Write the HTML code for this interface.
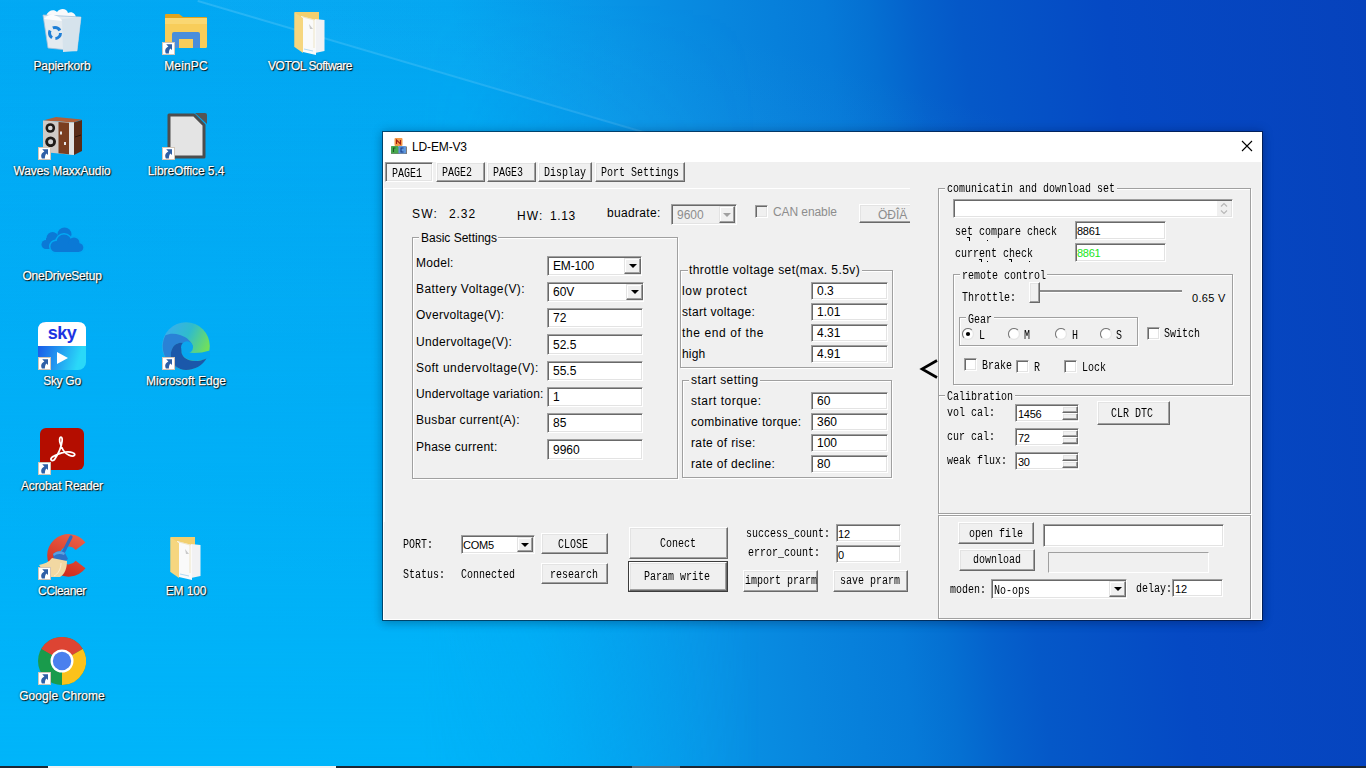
<!DOCTYPE html>
<html><head><meta charset="utf-8">
<style>
*{box-sizing:border-box;margin:0;padding:0}
html,body{width:1366px;height:768px;overflow:hidden}
body{position:relative;font-family:"Liberation Sans",sans-serif;font-size:12px;color:#000;
background:linear-gradient(83deg,#02aaf5 0px,#03a6f1 540px,#0894e6 700px,#0886de 810px,#067ad8 910px,#0570d2 955px,#0562cc 1000px,#0558c8 1045px,#0549c4 1190px,#0642bc 1449px);}
#bgb{position:absolute;left:0;top:0;width:1366px;height:768px;
 background:linear-gradient(180deg,rgba(0,182,250,0) 0%,rgba(0,182,250,.25) 35%,rgba(0,182,250,.9) 100%);
 -webkit-mask-image:linear-gradient(90deg,#000 0px,#000 420px,rgba(0,0,0,.4) 600px,rgba(0,0,0,0) 760px)}
#beam1{position:absolute;left:198px;top:0;width:700px;height:2px;transform-origin:0 0;transform:rotate(16.4deg);
 background:linear-gradient(90deg,rgba(190,235,255,.2),rgba(190,235,255,.14) 70%,rgba(190,235,255,0));filter:blur(.6px)}
#beam0{position:absolute;left:198px;top:-200px;width:900px;height:200px;transform-origin:0 100%;transform:rotate(16.4deg);
 background:linear-gradient(0deg,rgba(120,210,255,.05),rgba(120,210,255,0) 60%)}
.a{position:absolute}
/* desktop icons */
.lbl{position:absolute;color:#fff;font-size:12px;white-space:nowrap;text-align:center;
 text-shadow:1px 1px 1px #000,0 0 2px rgba(0,0,0,.85);-webkit-text-stroke:0.25px #fff;line-height:14px}
/* window */
#win{position:absolute;left:382px;top:131px;width:881px;height:490px;background:#fff;background-clip:padding-box;border:1px solid rgba(0,10,30,.55);
 box-shadow:0 0 10px rgba(0,0,30,.22),0 4px 8px rgba(0,0,30,.12)}
#client{position:absolute;left:384px;top:162px;width:877px;height:457px;background:#f0f0f0}
.s{position:absolute;font-family:"Liberation Sans",sans-serif;font-size:12px;line-height:12px;white-space:pre;color:#000}
.m{position:absolute;font-family:"Liberation Mono",monospace;font-size:12px;line-height:12px;white-space:pre;color:#000;
 transform:scaleX(.8333);transform-origin:0 0}
.g{color:#8d8d8d}
.ed{position:absolute;background:#fff;border:1px solid;border-color:#a0a0a0 #fff #fff #a0a0a0;
 box-shadow:inset 1px 1px #696969,inset -1px -1px #e3e3e3}
.bt{position:absolute;background:#f0f0f0;border:1px solid;border-color:#fff #696969 #696969 #fff;
 box-shadow:inset -1px -1px #a0a0a0,inset 1px 1px #e3e3e3}
.dd{position:absolute;background:#f0f0f0;border:1px solid;border-color:#e3e3e3 #696969 #696969 #e3e3e3;
 box-shadow:inset -1px -1px #a0a0a0,inset 1px 1px #fff}
.dd:after{content:"";position:absolute;left:50%;top:50%;margin-left:-4px;margin-top:-2px;border-left:4px solid transparent;border-right:4px solid transparent;border-top:4px solid #000}
.dd.dis:after{border-top-color:#a0a0a0}
.grp{position:absolute;border:1px solid #a0a0a0;box-shadow:inset 1px 1px #fff,1px 1px #fff}
.gl{position:absolute;background:#f0f0f0;height:12px}
.cb{position:absolute;width:13px;height:13px;background:#fff;border:1px solid;border-color:#a0a0a0 #fff #fff #a0a0a0;
 box-shadow:inset 1px 1px #696969,inset -1px -1px #e3e3e3}
.rd{position:absolute;width:12px;height:12px}
</style></head><body>
<div id="bgb"></div><div id="beam0"></div><div id="beam1"></div>

<!-- ============ WINDOW ============ -->
<div id="win"></div>
<div id="client"></div>
<!-- title -->
<svg class="a" style="left:390px;top:137px" width="18" height="18">
 <rect x="1" y="9.5" width="8" height="7.5" fill="#111" opacity=".55"/>
 <rect x="9" y="9.5" width="8" height="7.5" fill="#111" opacity=".55"/>
 <rect x="4.5" y="1" width="8" height="8" rx="1" fill="#f59a48"/>
 <rect x="1" y="9" width="7.5" height="7.5" rx="1" fill="#48a84e"/>
 <rect x="8.5" y="9" width="7.5" height="7.5" rx="1" fill="#5d96dc"/>
 <path d="M6.5 7V3L10.5 7V3" fill="none" stroke="#a01c10" stroke-width="1.1"/>
 <path d="M5.5 11H3.5V15" fill="none" stroke="#1d5a20" stroke-width="1.1"/>
 <path d="M13.5 11H11V15H13.5" fill="none" stroke="#1c3c88" stroke-width="1.1"/>
</svg>
<div class="s" style="left:412px;top:141px;letter-spacing:-0.14px">LD-EM-V3</div>
<svg class="a" style="left:1241px;top:140px" width="12" height="12"><path d="M1 1L11 11M11 1L1 11" stroke="#000" stroke-width="1.1"/></svg>

<!-- tabs -->
<div class="ed" style="left:385px;top:162px;width:48px;height:20px;background:#f4f4f4"></div>
<div class="m" style="left:392px;top:168px">PAGE1</div>
<div class="bt" style="left:436px;top:162px;width:49px;height:20px"></div>
<div class="m" style="left:442px;top:167px">PAGE2</div>
<div class="bt" style="left:487px;top:162px;width:49px;height:20px"></div>
<div class="m" style="left:493px;top:167px">PAGE3</div>
<div class="bt" style="left:538px;top:162px;width:54px;height:20px"></div>
<div class="m" style="left:544px;top:167px">Display</div>
<div class="bt" style="left:595px;top:162px;width:90px;height:20px"></div>
<div class="m" style="left:601px;top:167px">Port Settings</div>

<!-- tab page edge -->
<div class="a" style="left:384px;top:188px;width:526px;height:1px;background:#fff"></div>
<div class="a" style="left:384px;top:188px;width:1px;height:334px;background:#fff"></div>

<!-- SW / HW row -->
<div class="s" style="left:412px;top:208px;letter-spacing:1.25px">SW:</div>
<div class="s" style="left:449px;top:208px;letter-spacing:0.90px">2.32</div>
<div class="s" style="left:517px;top:210px;letter-spacing:1.15px">HW:</div>
<div class="s" style="left:550px;top:210px;letter-spacing:0.60px">1.13</div>
<div class="s" style="left:607px;top:207px;letter-spacing:0.33px">buadrate:</div>
<div class="ed" style="left:671px;top:204px;width:66px;height:21px;background:#f0f0f0"></div>
<div class="dd dis" style="left:719px;top:206px;width:16px;height:17px"></div>
<div class="s g" style="left:677px;top:209px">9600</div>
<div class="cb" style="left:755px;top:205px;background:#f0f0f0"></div>
<div class="s g" style="left:773px;top:206px;letter-spacing:-0.09px">CAN enable</div>
<div class="a" style="left:859px;top:204px;width:51px;height:19px;overflow:hidden">
 <div class="bt" style="left:0;top:0;width:60px;height:19px"></div>
 <div class="s g" style="left:19px;top:5px">ÖÐÎÄ</div>
</div>

<!-- Basic Settings -->
<div class="grp" style="left:412px;top:237px;width:266px;height:242px"></div>
<div class="gl" style="left:419px;top:232px;width:79px"></div>
<div class="s" style="left:421px;top:232px">Basic Settings</div>

<div class="s" style="left:416px;top:257px;letter-spacing:0.28px">Model:</div>
<div class="ed" style="left:547px;top:256px;width:95px;height:20px"></div>
<div class="dd" style="left:624px;top:258px;width:17px;height:16px"></div>
<div class="s" style="left:553px;top:260px;letter-spacing:-0.16px">EM-100</div>

<div class="s" style="left:416px;top:283px;letter-spacing:0.44px">Battery Voltage(V):</div>
<div class="ed" style="left:547px;top:282px;width:97px;height:20px"></div>
<div class="dd" style="left:626px;top:284px;width:17px;height:16px"></div>
<div class="s" style="left:553px;top:286px">60V</div>

<div class="s" style="left:416px;top:309px;letter-spacing:0.29px">Overvoltage(V):</div>
<div class="ed" style="left:547px;top:308px;width:96px;height:20px"></div>
<div class="s" style="left:553px;top:312px">72</div>

<div class="s" style="left:416px;top:336px;letter-spacing:0.35px">Undervoltage(V):</div>
<div class="ed" style="left:547px;top:334px;width:96px;height:21px"></div>
<div class="s" style="left:553px;top:339px">52.5</div>

<div class="s" style="left:416px;top:362px;letter-spacing:0.45px">Soft undervoltage(V):</div>
<div class="ed" style="left:547px;top:361px;width:96px;height:20px"></div>
<div class="s" style="left:553px;top:365px">55.5</div>

<div class="s" style="left:416px;top:388px;letter-spacing:0.18px">Undervoltage variation:</div>
<div class="ed" style="left:547px;top:387px;width:96px;height:20px"></div>
<div class="s" style="left:553px;top:391px">1</div>

<div class="s" style="left:416px;top:414px;letter-spacing:0.32px">Busbar current(A):</div>
<div class="ed" style="left:547px;top:413px;width:96px;height:20px"></div>
<div class="s" style="left:553px;top:417px">85</div>

<div class="s" style="left:416px;top:441px;letter-spacing:0.25px">Phase current:</div>
<div class="ed" style="left:547px;top:439px;width:96px;height:21px"></div>
<div class="s" style="left:553px;top:444px">9960</div>

<!-- throttle voltage set -->
<div class="grp" style="left:680px;top:270px;width:213px;height:98px"></div>
<div class="gl" style="left:688px;top:265px;width:174px"></div>
<div class="s" style="left:689px;top:264px;letter-spacing:0.42px">throttle voltage set(max. 5.5v)</div>
<div class="s" style="left:682px;top:285px;letter-spacing:0.67px">low protect</div>
<div class="ed" style="left:811px;top:282px;width:77px;height:18px"></div>
<div class="s" style="left:817px;top:285px">0.3</div>
<div class="s" style="left:682px;top:306px;letter-spacing:0.31px">start voltage:</div>
<div class="ed" style="left:811px;top:303px;width:77px;height:18px"></div>
<div class="s" style="left:817px;top:306px">1.01</div>
<div class="s" style="left:682px;top:327px;letter-spacing:0.62px">the end of the</div>
<div class="ed" style="left:811px;top:324px;width:77px;height:18px"></div>
<div class="s" style="left:817px;top:327px">4.31</div>
<div class="s" style="left:682px;top:348px;letter-spacing:0.20px">high</div>
<div class="ed" style="left:811px;top:345px;width:77px;height:18px"></div>
<div class="s" style="left:817px;top:348px">4.91</div>

<!-- start setting -->
<div class="grp" style="left:682px;top:380px;width:210px;height:98px"></div>
<div class="gl" style="left:689px;top:375px;width:71px"></div>
<div class="s" style="left:691px;top:374px;letter-spacing:0.42px">start setting</div>
<div class="s" style="left:691px;top:395px;letter-spacing:0.50px">start torque:</div>
<div class="ed" style="left:811px;top:392px;width:77px;height:18px"></div>
<div class="s" style="left:817px;top:395px">60</div>
<div class="s" style="left:691px;top:416px;letter-spacing:0.30px">combinative torque:</div>
<div class="ed" style="left:811px;top:413px;width:77px;height:18px"></div>
<div class="s" style="left:817px;top:416px">360</div>
<div class="s" style="left:691px;top:437px;letter-spacing:0.36px">rate of rise:</div>
<div class="ed" style="left:811px;top:434px;width:77px;height:18px"></div>
<div class="s" style="left:817px;top:437px">100</div>
<div class="s" style="left:691px;top:458px;letter-spacing:0.34px">rate of decline:</div>
<div class="ed" style="left:811px;top:455px;width:77px;height:18px"></div>
<div class="s" style="left:817px;top:458px">80</div>

<!-- bottom left -->
<div class="m" style="left:403px;top:539px">PORT:</div>
<div class="ed" style="left:461px;top:535px;width:74px;height:19px"></div>
<div class="dd" style="left:517px;top:537px;width:16px;height:15px"></div>
<div class="s" style="left:463px;top:539px;font-size:11px;letter-spacing:-0.2px">COM5</div>
<div class="bt" style="left:541px;top:533px;width:67px;height:21px"></div>
<div class="m" style="left:558px;top:539px">CLOSE</div>
<div class="m" style="left:403px;top:569px">Status:</div>
<div class="m" style="left:461px;top:569px">Connected</div>
<div class="bt" style="left:541px;top:563px;width:67px;height:21px"></div>
<div class="m" style="left:550px;top:569px">research</div>

<div class="bt" style="left:629px;top:527px;width:99px;height:32px"></div>
<div class="m" style="left:660px;top:538px">Conect</div>
<div class="a" style="left:628px;top:561px;width:100px;height:31px;border:1px solid #3c3c3c"></div>
<div class="bt" style="left:629px;top:562px;width:98px;height:29px"></div>
<div class="m" style="left:644px;top:571px">Param write</div>

<div class="m" style="left:746px;top:528px">success_count:</div>
<div class="ed" style="left:836px;top:524px;width:65px;height:18px"></div>
<div class="s" style="left:838px;top:528px;font-size:11px">12</div>
<div class="m" style="left:748px;top:547px">error_count:</div>
<div class="ed" style="left:836px;top:545px;width:65px;height:18px"></div>
<div class="s" style="left:838px;top:549px;font-size:11px">0</div>
<div class="bt" style="left:743px;top:570px;width:75px;height:22px"></div>
<div class="m" style="left:745px;top:575px">import prarm</div>
<div class="bt" style="left:833px;top:570px;width:75px;height:22px"></div>
<div class="m" style="left:840px;top:575px">save prarm</div>

<svg class="a" style="left:918px;top:357px" width="22" height="24"><path d="M19 3.5L4 12L19 20.5" fill="none" stroke="#000" stroke-width="2.6"/></svg>

<!-- right panel -->
<div class="grp" style="left:938px;top:188px;width:313px;height:326px"></div>
<div class="gl" style="left:945px;top:183px;width:172px"></div>
<div class="m" style="left:947px;top:183px">comunicatin and download set</div>
<div class="ed" style="left:953px;top:199px;width:280px;height:19px"></div>
<div class="a" style="left:1217px;top:201px;width:14px;height:15px;background:#f0f0f0"></div>
<svg class="a" style="left:1217px;top:201px" width="14" height="15"><path d="M4 5.5L7 2.5L10 5.5M4 9.5L7 12.5L10 9.5" fill="none" stroke="#b8b8b8" stroke-width="1.2"/></svg>
<div class="m" style="left:955px;top:226px">set compare check</div>
<div class="ed" style="left:1075px;top:221px;width:91px;height:19px"></div>
<div class="s" style="left:1077px;top:225px;font-size:11px;letter-spacing:-0.3px">8861</div>
<div class="m" style="left:955px;top:248px">current check</div>
<div class="a" style="left:967px;top:237px;width:3px;height:1px;background:#000"></div><div class="a" style="left:969px;top:237px;width:1px;height:4px;background:#000"></div>
<div class="a" style="left:987px;top:240px;width:1px;height:1px;background:#000"></div>
<div class="a" style="left:979px;top:259px;width:3px;height:1px;background:#000"></div><div class="a" style="left:981px;top:259px;width:1px;height:3px;background:#000"></div>
<div class="a" style="left:987px;top:261px;width:1px;height:1px;background:#000"></div>
<div class="a" style="left:1009px;top:259px;width:3px;height:1px;background:#000"></div><div class="a" style="left:1011px;top:259px;width:1px;height:3px;background:#000"></div>
<div class="a" style="left:1029px;top:261px;width:1px;height:1px;background:#000"></div>
<div class="ed" style="left:1075px;top:243px;width:91px;height:19px"></div>
<div class="s" style="left:1077px;top:247px;font-size:11px;letter-spacing:-0.3px;color:#19e619">8861</div>

<div class="grp" style="left:953px;top:274px;width:280px;height:111px"></div>
<div class="gl" style="left:960px;top:269px;width:87px"></div>
<div class="m" style="left:962px;top:270px">remote control</div>
<div class="m" style="left:962px;top:292px">Throttle:</div>
<div class="a" style="left:1035px;top:290px;width:147px;height:2px;background:#8c8c8c;box-shadow:0 1px #fff"></div>
<div class="bt" style="left:1029px;top:282px;width:11px;height:21px"></div>
<div class="s" style="left:1192px;top:292px;font-size:11px;letter-spacing:0.3px">0.65 V</div>

<div class="grp" style="left:959px;top:317px;width:179px;height:29px"></div>
<div class="gl" style="left:966px;top:312px;width:28px"></div>
<div class="m" style="left:968px;top:314px">Gear</div>
<svg class="rd" style="left:962px;top:328px" width="12" height="12"><path d="M2.1 9.9A5.5 5.5 0 0 1 9.9 2.1" fill="none" stroke="#7a7a7a" stroke-width="1.1"/><path d="M9.9 2.1A5.5 5.5 0 0 1 2.1 9.9" fill="none" stroke="#e6e6e6" stroke-width="1.1"/><circle cx="6" cy="6" r="4.6" fill="#fff"/><circle cx="6" cy="6" r="2.1" fill="#000"/></svg>
<div class="m" style="left:979px;top:330px">L</div>
<svg class="rd" style="left:1008px;top:328px" width="12" height="12"><path d="M2.1 9.9A5.5 5.5 0 0 1 9.9 2.1" fill="none" stroke="#7a7a7a" stroke-width="1.1"/><path d="M9.9 2.1A5.5 5.5 0 0 1 2.1 9.9" fill="none" stroke="#e6e6e6" stroke-width="1.1"/><circle cx="6" cy="6" r="4.6" fill="#fff"/></svg>
<div class="m" style="left:1024px;top:330px">M</div>
<svg class="rd" style="left:1055px;top:328px" width="12" height="12"><path d="M2.1 9.9A5.5 5.5 0 0 1 9.9 2.1" fill="none" stroke="#7a7a7a" stroke-width="1.1"/><path d="M9.9 2.1A5.5 5.5 0 0 1 2.1 9.9" fill="none" stroke="#e6e6e6" stroke-width="1.1"/><circle cx="6" cy="6" r="4.6" fill="#fff"/></svg>
<div class="m" style="left:1072px;top:330px">H</div>
<svg class="rd" style="left:1100px;top:328px" width="12" height="12"><path d="M2.1 9.9A5.5 5.5 0 0 1 9.9 2.1" fill="none" stroke="#7a7a7a" stroke-width="1.1"/><path d="M9.9 2.1A5.5 5.5 0 0 1 2.1 9.9" fill="none" stroke="#e6e6e6" stroke-width="1.1"/><circle cx="6" cy="6" r="4.6" fill="#fff"/></svg>
<div class="m" style="left:1116px;top:330px">S</div>
<div class="cb" style="left:1147px;top:327px"></div>
<div class="m" style="left:1164px;top:328px">Switch</div>
<div class="cb" style="left:964px;top:358px"></div>
<div class="m" style="left:982px;top:360px">Brake</div>
<div class="cb" style="left:1016px;top:360px"></div>
<div class="m" style="left:1034px;top:362px">R</div>
<div class="cb" style="left:1064px;top:360px"></div>
<div class="m" style="left:1082px;top:362px">Lock</div>

<!-- calibration -->
<div class="a" style="left:939px;top:395px;width:311px;height:1px;background:#a0a0a0;box-shadow:0 1px #fff"></div>
<div class="gl" style="left:945px;top:390px;width:70px"></div>
<div class="m" style="left:947px;top:391px">Calibration</div>
<div class="m" style="left:947px;top:407px">vol cal:</div>
<div class="ed" style="left:1015px;top:404px;width:64px;height:18px"></div>
<div class="bt" style="left:1062px;top:406px;width:16px;height:7px"></div>
<div class="bt" style="left:1062px;top:413px;width:16px;height:7px"></div>
<div class="s" style="left:1018px;top:408px;font-size:11px;letter-spacing:-0.3px">1456</div>
<div class="m" style="left:947px;top:431px">cur cal:</div>
<div class="ed" style="left:1015px;top:428px;width:64px;height:18px"></div>
<div class="bt" style="left:1062px;top:430px;width:16px;height:7px"></div>
<div class="bt" style="left:1062px;top:437px;width:16px;height:7px"></div>
<div class="s" style="left:1018px;top:432px;font-size:11px;letter-spacing:-0.3px">72</div>
<div class="m" style="left:947px;top:455px">weak flux:</div>
<div class="ed" style="left:1015px;top:452px;width:64px;height:18px"></div>
<div class="bt" style="left:1062px;top:454px;width:16px;height:7px"></div>
<div class="bt" style="left:1062px;top:461px;width:16px;height:7px"></div>
<div class="s" style="left:1018px;top:456px;font-size:11px;letter-spacing:-0.3px">30</div>
<div class="bt" style="left:1097px;top:401px;width:73px;height:24px"></div>
<div class="m" style="left:1111px;top:408px">CLR DTC</div>

<!-- bottom right panel -->
<div class="grp" style="left:938px;top:515px;width:313px;height:104px"></div>
<div class="bt" style="left:958px;top:522px;width:76px;height:22px"></div>
<div class="m" style="left:969px;top:528px">open file</div>
<div class="ed" style="left:1043px;top:524px;width:181px;height:23px"></div>
<div class="bt" style="left:959px;top:549px;width:76px;height:22px"></div>
<div class="m" style="left:973px;top:554px">download</div>
<div class="ed" style="left:1048px;top:552px;width:161px;height:21px;background:#f0f0f0;border-color:#a0a0a0 #fff #fff #a0a0a0;box-shadow:none"></div>
<div class="m" style="left:950px;top:584px">moden:</div>
<div class="ed" style="left:991px;top:579px;width:136px;height:20px"></div>
<div class="dd" style="left:1109px;top:581px;width:17px;height:16px"></div>
<div class="m" style="left:994px;top:585px">No-ops</div>
<div class="m" style="left:1136px;top:583px">delay:</div>
<div class="ed" style="left:1172px;top:579px;width:51px;height:18px"></div>
<div class="s" style="left:1175px;top:583px;font-size:11px">12</div>

<!-- DESKTOP -->
<svg width="0" height="0" style="position:absolute">
 <defs>
  <g id="sc">
   <rect x="0.5" y="35.5" width="12" height="12" fill="#fff" stroke="#d2c6b8"/>
   <path d="M4.2 37.3L10 37.3L10 43L8.4 41.4C7.2 42.6 6.9 44.2 6.9 46.4L3.9 46.4C2.7 44 2.9 41.2 6.4 39.5Z" fill="#2e5fa6"/>
  </g>
  <linearGradient id="skyg" x1="0" y1="0" x2="1" y2="0.3"><stop offset="0" stop-color="#1846e6"/><stop offset="1" stop-color="#2ad8f8"/></linearGradient>
  <linearGradient id="edg" x1="0.95" y1="0.55" x2="0.15" y2="0.15"><stop offset="0" stop-color="#72e05a"/><stop offset="0.55" stop-color="#30bccc"/><stop offset="1" stop-color="#38b0e8"/></linearGradient>
  <linearGradient id="ccg" x1="0.8" y1="0" x2="0.4" y2="1"><stop offset="0" stop-color="#ec6248"/><stop offset="1" stop-color="#cf2a1c"/></linearGradient>
 </defs>
</svg>

<!-- Papierkorb -->
<svg class="a" style="left:38px;top:7px" width="48" height="48">
 <path d="M8 9C10 3 16 2 19 5C23 0 29 2 30 6C34 4 38 7 38 11L24 14Z" fill="#f7f9fb"/>
 <path d="M5 8L43 10L39 44L10 41Z" fill="#e4ebf0" stroke="#9fc0da" stroke-width="0.8"/>
 <path d="M24 12L43 10L39 44L25 45Z" fill="#d6e3ec"/>
 <path d="M8 10C12 6 18 8 22 11L24 14L6 12Z" fill="#fbfcfd"/>
 <circle cx="17" cy="26" r="5.5" fill="none" stroke="#1f7fd6" stroke-width="3" stroke-dasharray="8 3.5"/>
</svg>
<div class="lbl" style="left:2px;top:59px;width:120px;letter-spacing:-0.08px">Papierkorb</div>

<!-- MeinPC -->
<svg class="a" style="left:162px;top:7px" width="48" height="48">
 <path d="M3 8Q3 7 4 7L17 7L21 10L44 10Q45 10 45 11L45 14L3 14Z" fill="#e2a31c"/>
 <rect x="3" y="11" width="42" height="30" rx="1.5" fill="#f8cd5a"/>
 <rect x="3" y="11" width="42" height="6" fill="#fad772"/>
 <path d="M10 41L10 27Q10 25 12 25L36 25Q38 25 38 27L38 41L31 41L31 32L17 32L17 41Z" fill="#4a8edb"/>
 <use href="#sc"/>
</svg>
<div class="lbl" style="left:126px;top:59px;width:120px;letter-spacing:0.14px">MeinPC</div>

<!-- VOTOL Software -->
<svg class="a" style="left:286px;top:7px" width="48" height="48">
 <path d="M8.5 5L33 5L33 40L8.5 40Z" fill="#f2cf6e"/>
 <path d="M29 12L38.5 13L38.5 44L29 46Z" fill="#f1f1f3"/>
 <path d="M15 9L30 13L30 48L17 45Z" fill="#fafafa"/>
 <path d="M17 10L28 13L28 41" fill="none" stroke="#e8d9a8" stroke-width="0.6"/>
 <path d="M23 17L27 22L24 22Z" fill="#c9c9c9"/>
 <path d="M18 42L27 44" stroke="#9fd0f0" stroke-width="0.8"/>
 <path d="M8.5 5.5L17 11L17 46L8.5 40Z" fill="#f6d67f"/>
</svg>
<div class="lbl" style="left:250px;top:59px;width:120px;letter-spacing:-0.48px">VOTOL Software</div>

<!-- Waves -->
<svg class="a" style="left:38px;top:112px" width="48" height="48">
 <path d="M5 8.5L18 5L44 7.5L36 10.5Z" fill="#b0603a"/>
 <path d="M36 10.5L44 8L44 39L36 43Z" fill="#5a2c18"/>
 <path d="M5 8.5L36 10.5L36 43L5 40Z" fill="#cfcac6"/>
 <path d="M20.5 10L31 10.7L31 42.3L20.5 41.3Z" fill="#7a3e20"/>
 <path d="M31 10.7L36 10.5L36 43L31 42.3Z" fill="#e2e2e2"/>
 <circle cx="12.3" cy="16" r="4.8" fill="#1e1a18"/><circle cx="12.3" cy="16" r="2.3" fill="#d8d8d8"/>
 <circle cx="12.6" cy="29.8" r="5.4" fill="#1e1a18"/><circle cx="12.6" cy="29.8" r="2.5" fill="#d0d0d0"/>
 <rect x="22" y="19.5" width="2" height="3" fill="#e6e6e6"/><rect x="26" y="30" width="2" height="3" fill="#e6e6e6"/>
 <path d="M37 25L43 23" stroke="#2a1408" stroke-width="1"/>
 <use href="#sc"/>
</svg>
<div class="lbl" style="left:2px;top:164px;width:120px;letter-spacing:-0.13px">Waves MaxxAudio</div>

<!-- LibreOffice -->
<svg class="a" style="left:162px;top:112px" width="48" height="48">
 <path d="M7 3L32 3L42 13L42 45L7 45Z" fill="#e4e4e4" stroke="#4d4d4d" stroke-width="3" stroke-linejoin="round"/>
 <path d="M33 1L43 1Q45 1 45 3L45 12Z" fill="#555"/>
 <use href="#sc"/>
</svg>
<div class="lbl" style="left:126px;top:164px;width:120px;letter-spacing:-0.09px">LibreOffice 5.4</div>

<!-- OneDrive -->
<svg class="a" style="left:38px;top:217px" width="48" height="48">
 <g fill="#0b79d6"><circle cx="8" cy="27.5" r="4.5"/><circle cx="14.5" cy="21" r="6"/><circle cx="26.5" cy="17.5" r="7"/><rect x="8" y="21" width="20" height="11"/></g>
 <g fill="#03a9f3" stroke="#03a9f3" stroke-width="3"><circle cx="18" cy="29.5" r="5.5"/><circle cx="26" cy="25" r="7.5"/><circle cx="36" cy="26" r="5.5"/><circle cx="41" cy="30.5" r="4.3"/><rect x="18" y="27" width="23" height="8"/></g>
 <g fill="#0b79d6"><circle cx="18" cy="29.5" r="5.5"/><circle cx="26" cy="25" r="7.5"/><circle cx="36" cy="26" r="5.5"/><circle cx="41" cy="30.5" r="4.3"/><rect x="18" y="27" width="23" height="8"/></g>
</svg>
<div class="lbl" style="left:2px;top:269px;width:120px;letter-spacing:-0.22px">OneDriveSetup</div>

<!-- Sky Go -->
<svg class="a" style="left:38px;top:322px" width="48" height="48">
 <rect x="0" y="0" width="48" height="48" rx="8" fill="url(#skyg)"/>
 <path d="M0 24L0 8Q0 0 8 0L40 0Q48 0 48 8L48 24Z" fill="#fff"/>
 <text x="24" y="17" text-anchor="middle" font-family="Liberation Sans" font-weight="bold" font-size="18" fill="#1d34e2" letter-spacing="-0.5">sky</text>
 <path d="M19 30L30 36L19 42Z" fill="#fff"/>
 <use href="#sc"/>
</svg>
<div class="lbl" style="left:2px;top:374px;width:120px;letter-spacing:-0.28px">Sky Go</div>

<!-- Edge -->
<svg class="a" style="left:162px;top:322px" width="48" height="48">
 <circle cx="24" cy="24" r="23.8" fill="url(#edg)"/>
 <path d="M19 26C24 31 33 33 48 28.5L48 36C46 37 45 37 44 37C36 40 26 40 20 33Z" fill="#05a7f0"/>
 <path d="M3.2 13.5C8 11 13 11.5 18 13C25 15 30 20 31 25C28 22 22 20 17 21C11 22 8 29 9 35C10 40 13 44 17 47A24 24 0 0 1 3.2 13.5Z" fill="#2a82d6"/>
 <path d="M17 21C22 20 28 22 31 25C29 23 25 22 22 24C18 27 19 33 23 36C28 40 37 40 44.5 36.5C41 43 33 48 24 48C16 48 10 42 9 35C8 29 11 22 17 21Z" fill="#1b58aa"/>
 <circle cx="25" cy="25.3" r="6" fill="#0aa6ee"/>
 <use href="#sc"/>
</svg>
<div class="lbl" style="left:126px;top:374px;width:120px">Microsoft Edge</div>

<!-- Acrobat -->
<svg class="a" style="left:38px;top:427px" width="48" height="48">
 <rect x="2" y="1" width="44" height="42" rx="6" fill="#b40d00"/>
 <path transform="translate(4.06 3.94) scale(.77 .78)" d="M16 37C11 40 9 35 16 32C24 28 33 25 40 28C45 30 42 34 35 31C30 29 25 22 23 14C22 6 27 6 26 13C25 22 20 31 16 37Z" fill="none" stroke="#fff" stroke-width="2.3"/>
 <use href="#sc"/>
</svg>
<div class="lbl" style="left:2px;top:479px;width:120px;letter-spacing:-0.15px">Acrobat Reader</div>

<!-- CCleaner -->
<svg class="a" style="left:38px;top:532px" width="48" height="48">
 <path d="M47.5 10.6A21.3 21.3 0 1 0 47.5 36.2L37.7 28.8A9 9 0 1 1 37.7 18Z" fill="url(#ccg)"/>
 <path d="M33 5L24.5 22" stroke="#2e6cc2" stroke-width="3.2" stroke-linecap="round"/>
 <path d="M15 22C18 19 23 18 27 21L30 27C26 31 20 32 16 29Z" fill="#2f72c6"/>
 <path d="M15 22C18 19 23 18 27 21L26 23C22 21 18 22 16 24Z" fill="#5aa0e0"/>
 <path d="M14 26L29 29C29 36 27 42 22 45L13 45C8 42 4 37 1 33C6 32 11 30 14 26Z" fill="#f2d8a2"/>
 <path d="M23 31C23 37 20 42 16 44" fill="none" stroke="#fff5e0" stroke-width="0.7"/>
 <use href="#sc"/>
</svg>
<div class="lbl" style="left:2px;top:584px;width:120px;letter-spacing:-0.36px">CCleaner</div>

<!-- EM 100 -->
<svg class="a" style="left:162px;top:532px" width="48" height="48">
 <path d="M8.5 5L33 5L33 40L8.5 40Z" fill="#f2cf6e"/>
 <path d="M29 12L38.5 13L38.5 44L29 46Z" fill="#f1f1f3"/>
 <path d="M15 9L30 13L30 48L17 45Z" fill="#fafafa"/>
 <path d="M17 10L28 13L28 41" fill="none" stroke="#e8d9a8" stroke-width="0.6"/>
 <path d="M23 17L27 22L24 22Z" fill="#c9c9c9"/>
 <path d="M18 42L27 44" stroke="#9fd0f0" stroke-width="0.8"/>
 <path d="M8.5 5.5L17 11L17 46L8.5 40Z" fill="#f6d67f"/>
</svg>
<div class="lbl" style="left:126px;top:584px;width:120px;letter-spacing:-0.14px">EM 100</div>

<!-- Chrome -->
<svg class="a" style="left:38px;top:637px" width="48" height="48">
 <circle cx="24" cy="24" r="24" fill="#199b4c"/>
 <path d="M24 24L3.2 12A24 24 0 0 1 44.8 12Z" fill="#dd4433"/>
 <path d="M24 24L44.8 12A24 24 0 0 1 24 48Z" fill="#fcc21b"/>
 <path d="M24 24L3.2 12L13.6 30Z" fill="#199b4c"/>
 <circle cx="24" cy="24" r="11.5" fill="#fff"/>
 <circle cx="24" cy="24" r="9.2" fill="#4a80ee"/>
 <use href="#sc"/>
</svg>
<div class="lbl" style="left:2px;top:689px;width:120px;letter-spacing:0.07px">Google Chrome</div>


<!-- taskbar strip -->
<div class="a" style="left:0;top:766px;width:1366px;height:2px;background:#1d2733"></div>
<div class="a" style="left:48px;top:766px;width:288px;height:2px;background:#f2f2f2"></div>
<div class="a" style="left:632px;top:766px;width:48px;height:2px;background:#5a6a78"></div>
</body></html>
